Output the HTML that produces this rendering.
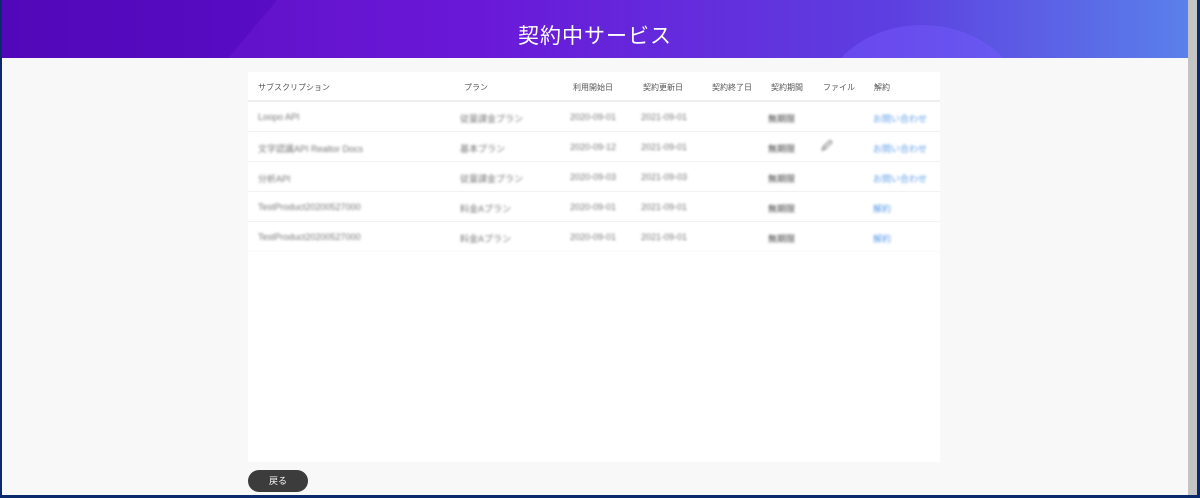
<!DOCTYPE html>
<html><head><meta charset="utf-8"><style>
*{margin:0;padding:0;box-sizing:border-box}
body{width:1200px;height:498px;overflow:hidden;background:#0b2a6b;font-family:"Liberation Sans","Noto Sans CJK JP",sans-serif;position:relative}
.page{position:absolute;left:2px;top:0;width:1186px;height:495px;background:#f8f8f8;overflow:hidden}
.hdr{position:absolute;left:0;top:0;width:1186px;height:58px;background:linear-gradient(90deg,#5a0cbc 0%,#6a18d8 40%,#5d3fe0 75%,#5a80ea 100%);overflow:hidden}
.hdr .t{position:absolute;width:100%;top:20px;text-align:center;color:#fff;font-size:21px;letter-spacing:1px}
.hdr .s1{position:absolute;left:-40px;top:-20px;width:290px;height:100px;background:rgba(70,0,180,.35);transform:skewX(-40deg)}
.hdr .c{position:absolute;left:820px;top:25px;width:200px;height:160px;border-radius:50%;background:rgba(120,90,255,.45)}
.sb{position:absolute;left:1188px;top:0;width:9px;height:495px;background:#c4c4c4}
.card{position:absolute;left:246px;top:72px;width:692px;height:390px;background:#fff}
.row{position:absolute;left:0;width:692px;height:30px;border-bottom:1px solid #f2f2f2;font-size:8px;color:#555}
.row span{position:absolute;top:10px}
.b{filter:blur(1.4px);color:#777;font-size:9px}
.bl{filter:blur(1.4px);color:#5a9be8;font-size:9px}
.btn{position:absolute;left:246px;top:470px;width:60px;height:22px;border-radius:11px;background:#3c3c3c;color:#fff;font-size:9px;text-align:center;line-height:22px}
</style></head><body>
<div class="page">
<div class="hdr"><div class="s1"></div><div class="c"></div><div class="t">契約中サービス</div></div>
<div class="card">
<div class="row" style="top:0;height:30px;border-bottom:2px solid #eee"><span style="left:10px;top:10px">サブスクリプション</span><span style="left:216px;top:10px">プラン</span><span style="left:325px;top:10px">利用開始日</span><span style="left:395px;top:10px">契約更新日</span><span style="left:464px;top:10px">契約終了日</span><span style="left:523px;top:10px">契約期間</span><span style="left:575px;top:10px">ファイル</span><span style="left:626px;top:10px">解約</span></div>
<div class="row" style="top:30px"><span class="b" style="left:10px">Loopo API</span><span class="b" style="left:212px">従量課金プラン</span><span class="b" style="left:322px">2020-09-01</span><span class="b" style="left:393px">2021-09-01</span><span class="b" style="left:520px;color:#444">無期限</span><span class="bl" style="left:625px">お問い合わせ</span></div>
<div class="row" style="top:60px"><span class="b" style="left:10px">文字認識API Realtor Docs</span><span class="b" style="left:212px">基本プラン</span><span class="b" style="left:322px">2020-09-12</span><span class="b" style="left:393px">2021-09-01</span><span class="b" style="left:520px;color:#444">無期限</span><span class="b" style="left:573px;color:#444;font-size:11px;top:6px">🖉</span><span class="bl" style="left:625px">お問い合わせ</span></div>
<div class="row" style="top:90px"><span class="b" style="left:10px">分析API</span><span class="b" style="left:212px">従量課金プラン</span><span class="b" style="left:322px">2020-09-03</span><span class="b" style="left:393px">2021-09-03</span><span class="b" style="left:520px;color:#444">無期限</span><span class="bl" style="left:625px">お問い合わせ</span></div>
<div class="row" style="top:120px"><span class="b" style="left:10px">TestProduct20200527000</span><span class="b" style="left:212px">料金Aプラン</span><span class="b" style="left:322px">2020-09-01</span><span class="b" style="left:393px">2021-09-01</span><span class="b" style="left:520px;color:#444">無期限</span><span class="bl" style="left:625px">解約</span></div>
<div class="row" style="top:150px;border-bottom-color:#fafafa"><span class="b" style="left:10px">TestProduct20200527000</span><span class="b" style="left:212px">料金Aプラン</span><span class="b" style="left:322px">2020-09-01</span><span class="b" style="left:393px">2021-09-01</span><span class="b" style="left:520px;color:#444">無期限</span><span class="bl" style="left:625px">解約</span></div>
</div>
<div class="btn">戻る</div>
</div>
<div class="sb"></div>
</body></html>
